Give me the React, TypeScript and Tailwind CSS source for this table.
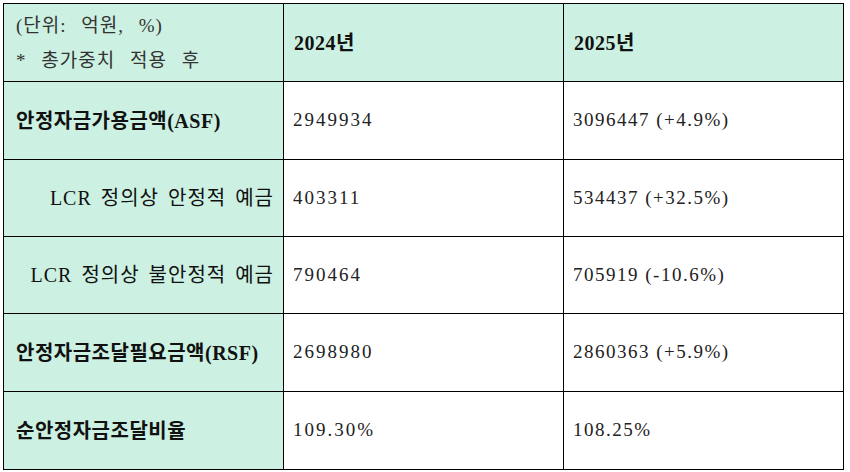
import React from "react";

const font = {
  fontFamily: '"Liberation Serif", "Noto Sans CJK KR", serif',
};

type Row = {
  label: string;
  indent?: boolean;
  y2024: string;
  y2025: string;
  h: string;
};

const rows: Row[] = [
  { label: "안정자금가용금액(ASF)", y2024: "2949934", y2025: "3096447 (+4.9%)", h: "h-[77px]" },
  { label: "LCR 정의상 안정적 예금", indent: true, y2024: "403311", y2025: "534437 (+32.5%)", h: "h-[76px]" },
  { label: "LCR 정의상 불안정적 예금", indent: true, y2024: "790464", y2025: "705919 (-10.6%)", h: "h-[76px]" },
  { label: "안정자금조달필요금액(RSF)", y2024: "2698980", y2025: "2860363 (+5.9%)", h: "h-[77px]" },
  { label: "순안정자금조달비율", y2024: "109.30%", y2025: "108.25%", h: "h-[77px]" },
];

export default function App() {
  return (
    <div className="w-[850px] h-[472px] bg-white pt-[3px] pl-[3px]" style={font}>
      <div className="grid grid-cols-[279px_279px_279px] gap-px bg-black p-px w-[841px]">
        {/* header */}
        <div className="h-[77px] bg-[#ccf0e1] flex flex-col justify-center gap-[16px] pl-[12px] pt-[1px] text-[19px] tracking-[1px] [word-spacing:9px] text-[#333] leading-none">
          <span>(단위: 억원, %)</span>
          <span>* 총가중치 적용 후</span>
        </div>
        <div className="h-[77px] bg-[#ccf0e1] flex items-center pl-[10px] text-[20px] font-bold tracking-[0.5px] text-[#111]">
          2024년
        </div>
        <div className="h-[77px] bg-[#ccf0e1] flex items-center pl-[10px] text-[20px] font-bold tracking-[0.5px] text-[#111]">
          2025년
        </div>

        {rows.map((r) => (
          <React.Fragment key={r.label}>
            <div
              className={`${r.h} bg-[#ccf0e1] flex items-center text-[20px] text-[#111] ${
                r.indent
                  ? "justify-end pr-[9px] tracking-[1px] [word-spacing:3px]"
                  : "pl-[12px] font-bold tracking-[0.5px]"
              }`}
            >
              {r.label}
            </div>
            <div className={`${r.h} bg-white flex items-center pl-[9px] text-[19px] tracking-[2px] text-[#222]`}>
              {r.y2024}
            </div>
            <div className={`${r.h} bg-white flex items-center pl-[9px] text-[19px] tracking-[1.5px] text-[#222]`}>
              {r.y2025}
            </div>
          </React.Fragment>
        ))}
      </div>
    </div>
  );
}
